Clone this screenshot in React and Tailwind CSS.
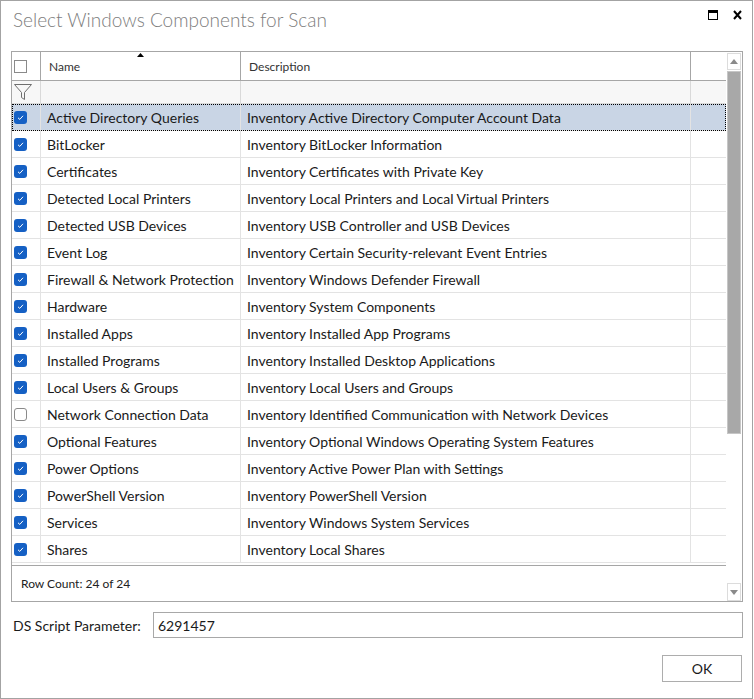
import React from "react";

const rows = [
  ["Active Directory Queries", "Inventory Active Directory Computer Account Data", true],
  ["BitLocker", "Inventory BitLocker Information", true],
  ["Certificates", "Inventory Certificates with Private Key", true],
  ["Detected Local Printers", "Inventory Local Printers and Local Virtual Printers", true],
  ["Detected USB Devices", "Inventory USB Controller and USB Devices", true],
  ["Event Log", "Inventory Certain Security-relevant Event Entries", true],
  ["Firewall & Network Protection", "Inventory Windows Defender Firewall", true],
  ["Hardware", "Inventory System Components", true],
  ["Installed Apps", "Inventory Installed App Programs", true],
  ["Installed Programs", "Inventory Installed Desktop Applications", true],
  ["Local Users & Groups", "Inventory Local Users and Groups", true],
  ["Network Connection Data", "Inventory Identified Communication with Network Devices", false],
  ["Optional Features", "Inventory Optional Windows Operating System Features", true],
  ["Power Options", "Inventory Active Power Plan with Settings", true],
  ["PowerShell Version", "Inventory PowerShell Version", true],
  ["Services", "Inventory Windows System Services", true],
  ["Shares", "Inventory Local Shares", true],
];

function Check({ checked }) {
  if (!checked) {
    return <div className="w-[13px] h-[13px] rounded-[3px] border border-[#8a8a8a] bg-white" />;
  }
  return (
    <div className="w-[13px] h-[13px] rounded-[3px] bg-[#1560c4] flex items-center justify-center">
      <svg width="9" height="9" viewBox="0 0 9 9">
        <path d="M2 4.8 L3.8 6.4 L7 2.8" fill="none" stroke="white" strokeWidth="1" />
      </svg>
    </div>
  );
}

export default function App() {
  return (
    <div
      className="w-[753px] h-[699px] bg-white border border-[#a3a3a3] flex flex-col text-[#1a1a1a]"
      style={{ fontFamily: "Lato, 'Liberation Sans', sans-serif" }}
    >
      {/* Title bar */}
      <div className="h-[50px] flex items-start justify-between">
        <div className="pl-[12px] pt-[7px] text-[19px] font-light text-[#7d7d7d] leading-[24px]">
          Select Windows Components for Scan
        </div>
        <div className="flex items-center gap-[15px] pt-[9px] pr-[10px]">
          <svg width="10" height="10" viewBox="0 0 10 10">
            <rect x="0.5" y="0.5" width="9" height="9" fill="none" stroke="#000" strokeWidth="1" />
            <rect x="0" y="0" width="10" height="3" fill="#000" />
          </svg>
          <svg width="9" height="10" viewBox="0 0 9 10">
            <path d="M1 1 L8 9 M8 1 L1 9" stroke="#000" strokeWidth="2" />
          </svg>
        </div>
      </div>

      {/* Grid */}
      <div className="ml-[10px] w-[732px] h-[551px] border border-[#a6a6a6] flex">
        <div className="w-[714px] flex flex-col">
          {/* Header */}
          <div className="h-[29px] flex border-b border-[#a6a6a6] text-[12px] text-[#333]">
            <div className="w-[29px] border-r border-[#a6a6a6] flex items-center pl-[2px]">
              <div className="w-[13px] h-[13px] border border-[#8a8a8a] bg-white" />
            </div>
            <div className="w-[200px] border-r border-[#a6a6a6] relative flex items-center pl-[8px] pt-[1px]">
              Name
              <svg className="absolute left-[96px] top-[1px]" width="7" height="4" viewBox="0 0 7 4">
                <path d="M0 4 L3.5 0 L7 4 Z" fill="#000" />
              </svg>
            </div>
            <div className="w-[450px] border-r border-[#a6a6a6] flex items-center pl-[8px] pt-[1px]">
              Description
            </div>
            <div className="flex-1" />
          </div>
          {/* Filter row */}
          <div className="h-[23px] flex border-b border-[#d9d9d9] bg-[#f7f7f7]">
            <div className="w-[29px] border-r border-[#d9d9d9] flex items-center pl-[2px]">
              <svg width="18" height="16" viewBox="0 0 18 16">
                <path d="M0.5 0.5 H17.5 L10.5 8.5 V15.5 L7.5 13.5 V8.5 Z" fill="none" stroke="#6e6e6e" strokeWidth="1" />
              </svg>
            </div>
            <div className="w-[200px] border-r border-[#d9d9d9]" />
            <div className="w-[450px] border-r border-[#d9d9d9]" />
            <div className="flex-1" />
          </div>
          {/* Body */}
          <div className="h-[461px] overflow-hidden text-[14px]">
            {rows.map(([name, desc, checked], i) => (
              <div
                key={name}
                className={
                  "h-[27px] flex border-b border-[#e3e3e3] " +
                  (i === 0 ? "bg-[#c9d5e5] outline outline-1 outline-dotted outline-black -outline-offset-1 relative" : "")
                }
              >
                <div className="w-[29px] border-r border-[#e3e3e3] flex items-center pl-[2px]">
                  <Check checked={checked} />
                </div>
                <div className="w-[200px] border-r border-[#e3e3e3] flex items-center pl-[6px] whitespace-nowrap">
                  {name}
                </div>
                <div className="w-[450px] border-r border-[#e3e3e3] flex items-center pl-[6px] whitespace-nowrap">
                  {desc}
                </div>
                <div className="flex-1" />
              </div>
            ))}
          </div>
          {/* Footer */}
          <div className="flex-1 border-t border-[#a6a6a6] flex items-center pl-[9px] text-[12px] text-[#222]">
            Row Count: 24 of 24
          </div>
        </div>
        {/* Scrollbar */}
        <div className="w-[16px] flex flex-col pl-[1px] pr-[1px] pt-[1px]">
          <div className="h-[17px] border border-[#dcdcdc] bg-white flex items-center justify-center">
            <svg width="8" height="5" viewBox="0 0 8 5">
              <path d="M0 5 L4 0 L8 5 Z" fill="#8a8a8a" />
            </svg>
          </div>
          <div className="h-[363px] mt-[1px] bg-[#a8a8a8] border border-[#c6c6c6]" />
          <div className="flex-1" />
          <div className="h-[18px] border border-[#dcdcdc] bg-white flex items-center justify-center">
            <svg width="8" height="5" viewBox="0 0 8 5">
              <path d="M0 0 L8 0 L4 5 Z" fill="#8a8a8a" />
            </svg>
          </div>
        </div>
      </div>

      {/* Parameter row */}
      <div className="flex items-center mt-[10px] h-[26px]">
        <div className="pl-[12px] w-[152px] text-[14px] whitespace-nowrap">DS Script Parameter:</div>
        <div className="w-[590px] h-[26px] border border-[#a8a8a8] flex items-center pl-[4px] text-[14px]">
          6291457
        </div>
      </div>

      {/* OK */}
      <div className="flex justify-end mt-[17px] pr-[10px]">
        <div className="w-[80px] h-[27px] border border-[#adadad] flex items-center justify-center text-[14px]">
          OK
        </div>
      </div>
    </div>
  );
}
